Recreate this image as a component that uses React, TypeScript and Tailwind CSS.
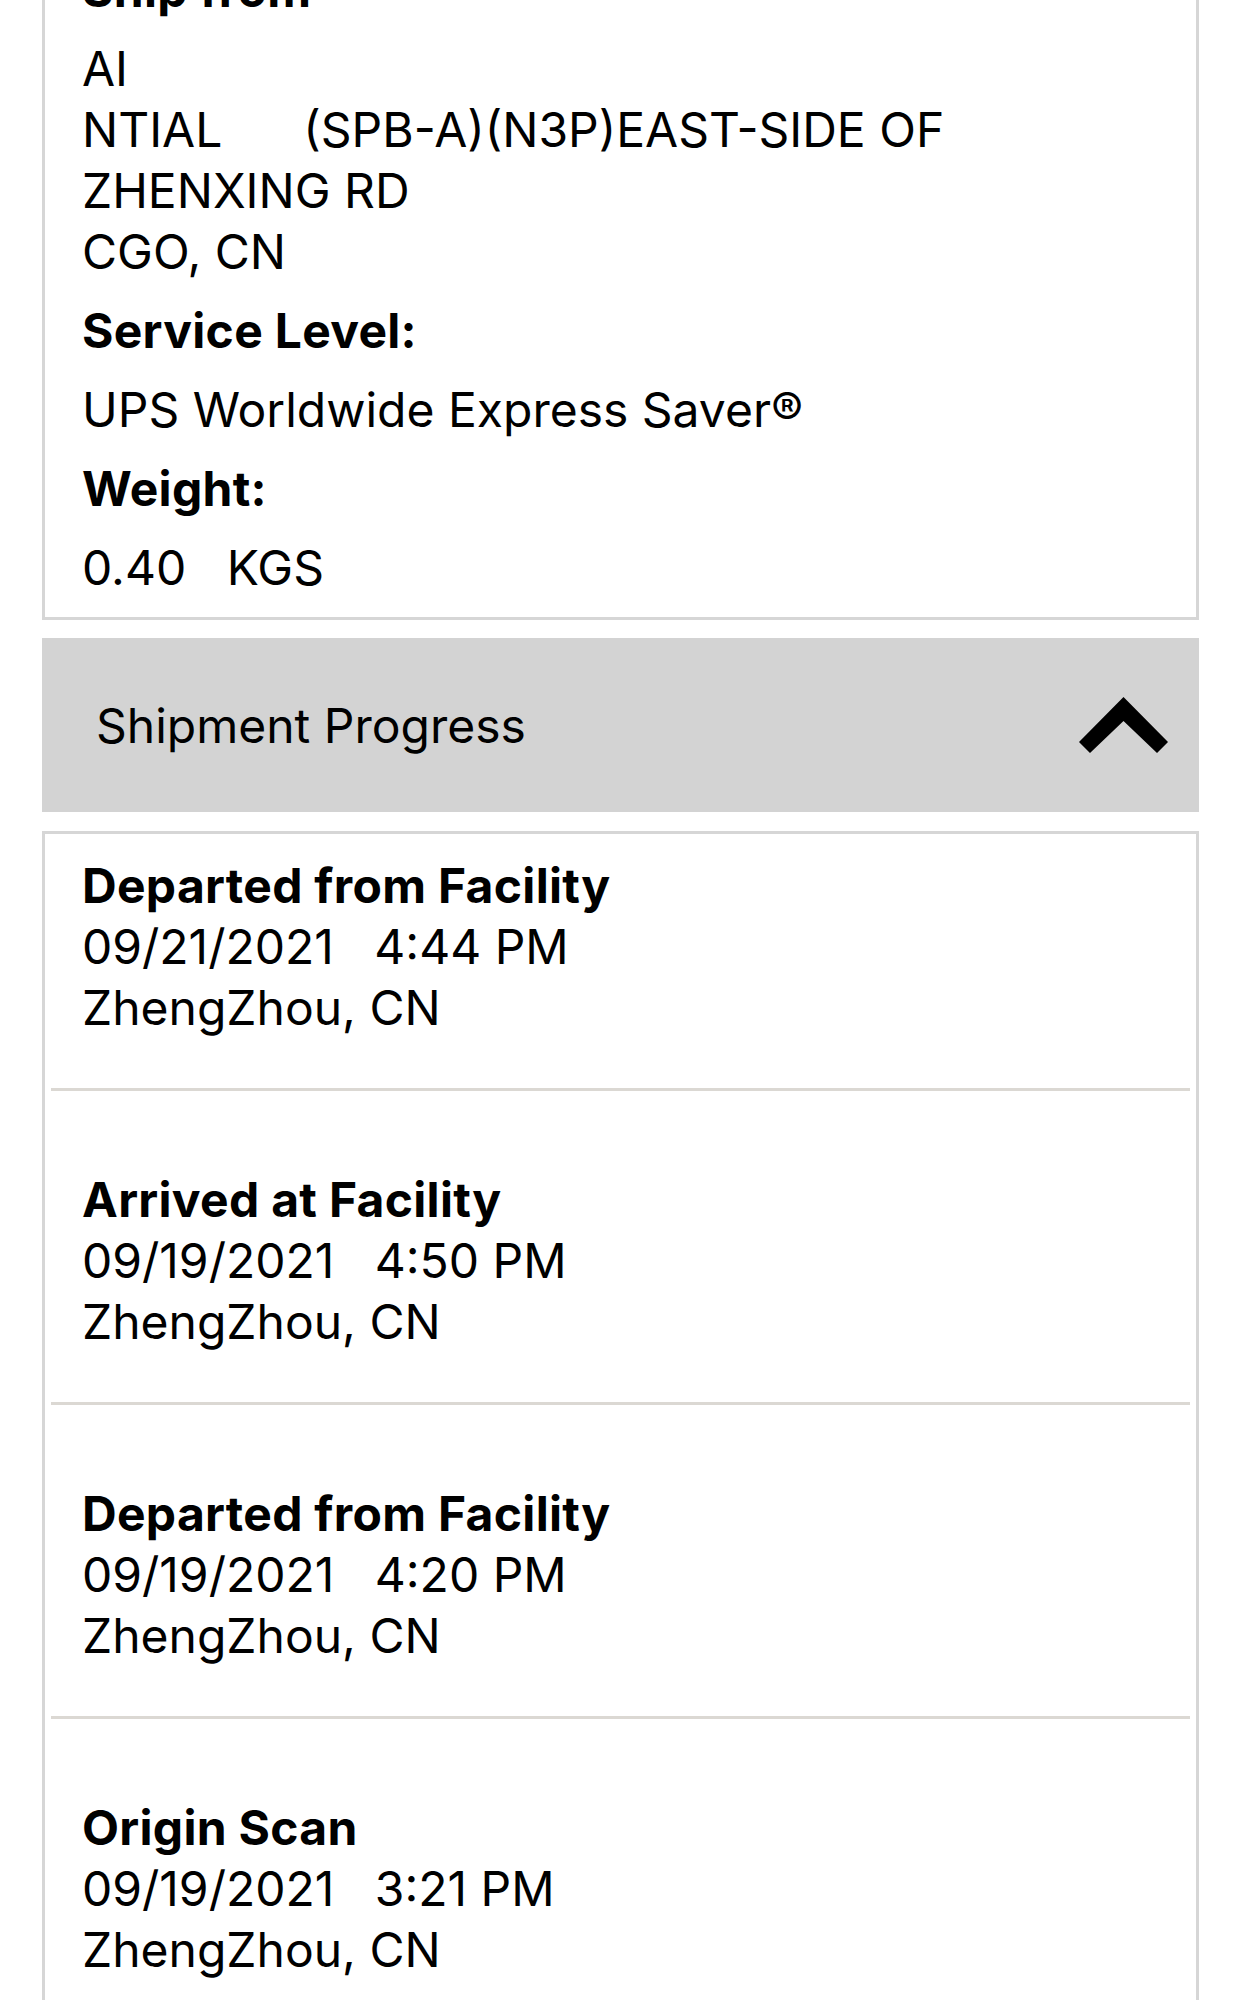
import React from 'react';

type Field = { label: string; lines: string[] };

const SHIP_FIELDS: Field[] = [
  {
    label: 'Ship from',
    lines: ['AI', 'NTIAL      (SPB-A)(N3P)EAST-SIDE OF', 'ZHENXING RD', 'CGO, CN'],
  },
  { label: 'Service Level:', lines: ['UPS Worldwide Express Saver®'] },
  { label: 'Weight:', lines: ['0.40   KGS'] },
];

const PROGRESS = [
  { status: 'Departed from Facility', date: '09/21/2021', time: '4:44 PM', place: 'ZhengZhou, CN' },
  { status: 'Arrived at Facility', date: '09/19/2021', time: '4:50 PM', place: 'ZhengZhou, CN' },
  { status: 'Departed from Facility', date: '09/19/2021', time: '4:20 PM', place: 'ZhengZhou, CN' },
  { status: 'Origin Scan', date: '09/19/2021', time: '3:21 PM', place: 'ZhengZhou, CN' },
];

const ChevronUp: React.FC = () => (
  <svg width="89" height="56" viewBox="0 0 89 56" aria-hidden="true">
    <polygon points="44.5,0 89,45 78,56 44.5,24 11,56 0,45" fill="#000" />
  </svg>
);

export default function App() {
  return (
    <div className="min-h-screen overflow-hidden bg-white font-['Inter',sans-serif] text-[48px] leading-[61px] text-black">
      <div className="px-[42px]">
        {/* Shipment details card, scrolled so the top is cut off */}
        <section className="-mt-[66px] border-[3px] border-[#d6d6d6] pt-[22px] pb-[19px] pl-[37px] pr-6">
          {SHIP_FIELDS.map((field, i) => (
            <div key={field.label} className={i > 0 ? 'mt-[18px]' : ''}>
              <div className="mb-[18px] font-bold tracking-[0.3px]">{field.label}</div>
              {field.lines.map((line) => (
                <div key={line} className="whitespace-pre">
                  {line}
                </div>
              ))}
            </div>
          ))}
        </section>

        {/* Collapsible header */}
        <button
          type="button"
          className="mt-[18px] flex h-[174px] w-full items-center justify-between bg-[#d3d3d3] pl-[54px] pr-[31px] text-left"
        >
          <span>Shipment Progress</span>
          <ChevronUp />
        </button>

        {/* Progress list */}
        <section className="mt-[19px] border-[3px] border-[#d6d6d6]">
          {PROGRESS.map((item, i) => (
            <div key={i}>
              <div className={`pl-[37px] pr-6 pb-[50px] ${i === 0 ? 'pt-[21px]' : 'pt-[78px]'}`}>
                <div className="font-bold tracking-[0.3px]">{item.status}</div>
                <div className="whitespace-pre">
                  {item.date}
                  {'   '}
                  {item.time}
                </div>
                <div>{item.place}</div>
              </div>
              <div className="mx-[6px] h-[3px] bg-[#dbd8d3]" />
            </div>
          ))}
        </section>
      </div>
    </div>
  );
}
